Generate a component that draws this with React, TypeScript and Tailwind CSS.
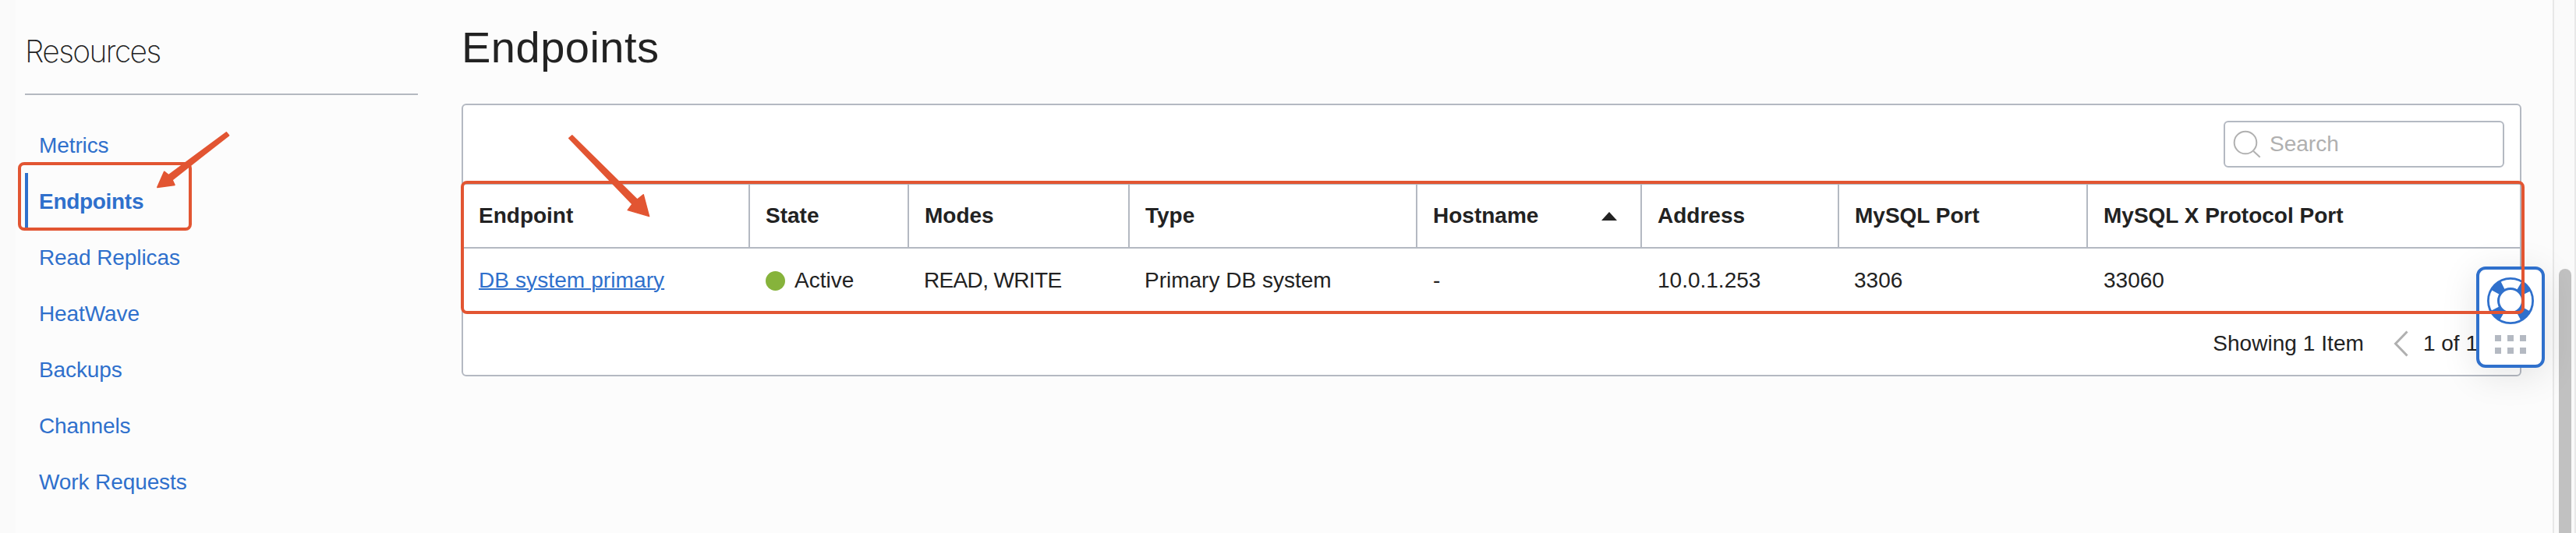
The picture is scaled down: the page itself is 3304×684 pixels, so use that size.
const NAV = ['Metrics', 'Endpoints', 'Read Replicas', 'HeatWave', 'Backups', 'Channels', 'Work Requests'];

const COLUMNS = ['Endpoint', 'State', 'Modes', 'Type', 'Hostname', 'Address', 'MySQL Port', 'MySQL X Protocol Port'];

const GRID = 'grid grid-cols-[368px_204px_283px_369px_288px_253px_319px_1fr]';

function Sidebar() {
  return (
    <aside className="ml-3 w-[504px] shrink-0">
      <h2 className="h-[122px] border-b-2 border-[#b4b9c0] pt-[43px] font-['Inter',sans-serif] text-[39px] leading-[46px] font-extralight tracking-[-1.6px] text-[#222]">
        Resources
      </h2>
      <ul className="mt-7">
        {NAV.map((item) =>
          item === 'Endpoints' ? (
            <li
              key={item}
              className="h-[72px] border-l-4 border-[#2f70cc] pl-[14px] font-bold leading-[73px] tracking-[-0.3px] text-[#2f70cc]"
            >
              {item}
            </li>
          ) : (
            <li key={item} className="h-[72px] pl-[18px] leading-[73px] tracking-[-0.1px] text-[#2f70cc]">
              {item}
            </li>
          ),
        )}
      </ul>
    </aside>
  );
}

function SearchBox() {
  return (
    <div className="flex h-[60px] w-[360px] items-center rounded-md border-2 border-[#b4b9c2] bg-white text-[#b0b0b0]">
      <svg className="ml-[9px] h-10 w-10" viewBox="0 0 40 40" fill="none" stroke="#b0b0b0" strokeWidth="2">
        <circle cx="17" cy="18" r="14.3" />
        <path d="M27.3 29 L35.7 36.7" />
      </svg>
      <span className="ml-[8px]">Search</span>
    </div>
  );
}

function EndpointsTable() {
  return (
    <section className="h-[350px] w-[2642px] rounded-md border-2 border-[#b4b9c2] bg-white">
      <div className="flex h-[100px] justify-end pt-5 pr-5">
        <SearchBox />
      </div>
      <div className={`${GRID} h-[84px] border-y-2 border-[#b4b9c2]`}>
        {COLUMNS.map((name, i) => (
          <div
            key={name}
            className={
              i === COLUMNS.length - 1
                ? 'flex items-center justify-between pl-5 font-bold'
                : 'flex items-center justify-between border-r-2 border-[#b4b9c2] pr-[30px] pl-5 font-bold'
            }
          >
            <span className="whitespace-nowrap">{name}</span>
            {name === 'Hostname' && (
              <svg className="h-[11px] w-5" viewBox="0 0 20 11">
                <path d="M0 11 L10 0 L20 11 Z" fill="#222" />
              </svg>
            )}
          </div>
        ))}
      </div>
      <div className={`${GRID} h-[82px] items-center`}>
        <div className="pl-5">
          <a className="tracking-[0.1px] text-[#2f70cc] underline decoration-2">DB system primary</a>
        </div>
        <div className="flex items-center gap-3 pl-5">
          <span className="size-[25px] rounded-full bg-[#86b33b]" />
          Active
        </div>
        <div className="pl-[19px] tracking-[-0.65px]">READ, WRITE</div>
        <div className="pl-[19px]">Primary DB system</div>
        <div className="pl-5">-</div>
        <div className="pl-5">10.0.1.253</div>
        <div className="pl-[19px]">3306</div>
        <div className="pl-5">33060</div>
      </div>
      <div className="flex h-20 items-center justify-end pr-[54px]">
        <span className="tracking-[0.05px]">Showing 1 Item</span>
        <svg className="mr-[19px] ml-[38px] h-[34px] w-[19px]" viewBox="0 0 19 34" fill="none" stroke="#b0b0b0" strokeWidth="3">
          <path d="M17.5 1.5 L2.5 17 L17.5 32.5" />
        </svg>
        <span>1 of 1</span>
      </div>
    </section>
  );
}

function HelpWidget() {
  return (
    <div className="absolute top-[342px] left-[3176px] flex h-[130px] w-[88px] flex-col items-center rounded-[12px] border-4 border-[#2f70cc] bg-white pt-[10px] shadow-[0_8px_48px_rgba(0,0,0,0.11)]">
      <svg className="size-[60px]" viewBox="-30 -30 60 60" fill="none" stroke="#2f70cc">
        <circle r="22.5" strokeWidth="12" strokeDasharray="13 22.343" strokeDashoffset="-11.17" />
        <circle r="28.6" strokeWidth="2.8" />
        <circle r="15.5" strokeWidth="3" />
      </svg>
      <div className="mt-[14px] grid grid-cols-3 gap-2">
        {[0, 1, 2, 3, 4, 5].map((n) => (
          <span key={n} className="size-2 bg-[#b4b9c2]" />
        ))}
      </div>
    </div>
  );
}

function Annotations() {
  return (
    <>
      <div className="absolute top-[208px] left-[23px] h-[88px] w-[223px] rounded-lg border-4 border-[#e25532]" />
      <div className="absolute top-[232px] left-[591px] h-[171px] w-[2647px] rounded-lg border-4 border-[#e25532]" />
      <svg
        className="absolute top-0 left-0 h-[300px] w-[860px]"
        viewBox="0 0 860 300"
        fill="#e25532"
        stroke="#e25532"
        strokeWidth="1.5"
        strokeLinejoin="round"
      >
        <path d="M290.3 169.8 L293.6 173.8 L221 230.8 L224 237.4 L201.8 240.4 L210.6 220.2 L216.3 224.7 Z" />
        <path d="M729.8 177.4 L733.8 173.8 L817.3 256 L825.2 249.8 L832.6 277.6 L805.2 269.6 L811 262 Z" />
      </svg>
    </>
  );
}

export default function App() {
  return (
    <div className="relative flex h-[684px] w-[3304px] overflow-hidden bg-[#fcfcfc] font-['Liberation_Sans',Arial,sans-serif] text-[28px] leading-8 text-[#222]">
      <div className="w-5 bg-[#fafafa]" />
      <Sidebar />
      <main className="ml-14 flex-1">
        <h1 className="h-[133px] pt-[29px] text-[56px] leading-[64px] tracking-[0.5px]">Endpoints</h1>
        <EndpointsTable />
      </main>
      <div className="w-[30px] border-x-2 border-[#e8e8e8] bg-[#fafafa] pt-[345px] pl-[6px]">
        <div className="h-[400px] w-4 rounded-full bg-[#c1c1c1]" />
      </div>
      <HelpWidget />
      <Annotations />
    </div>
  );
}
